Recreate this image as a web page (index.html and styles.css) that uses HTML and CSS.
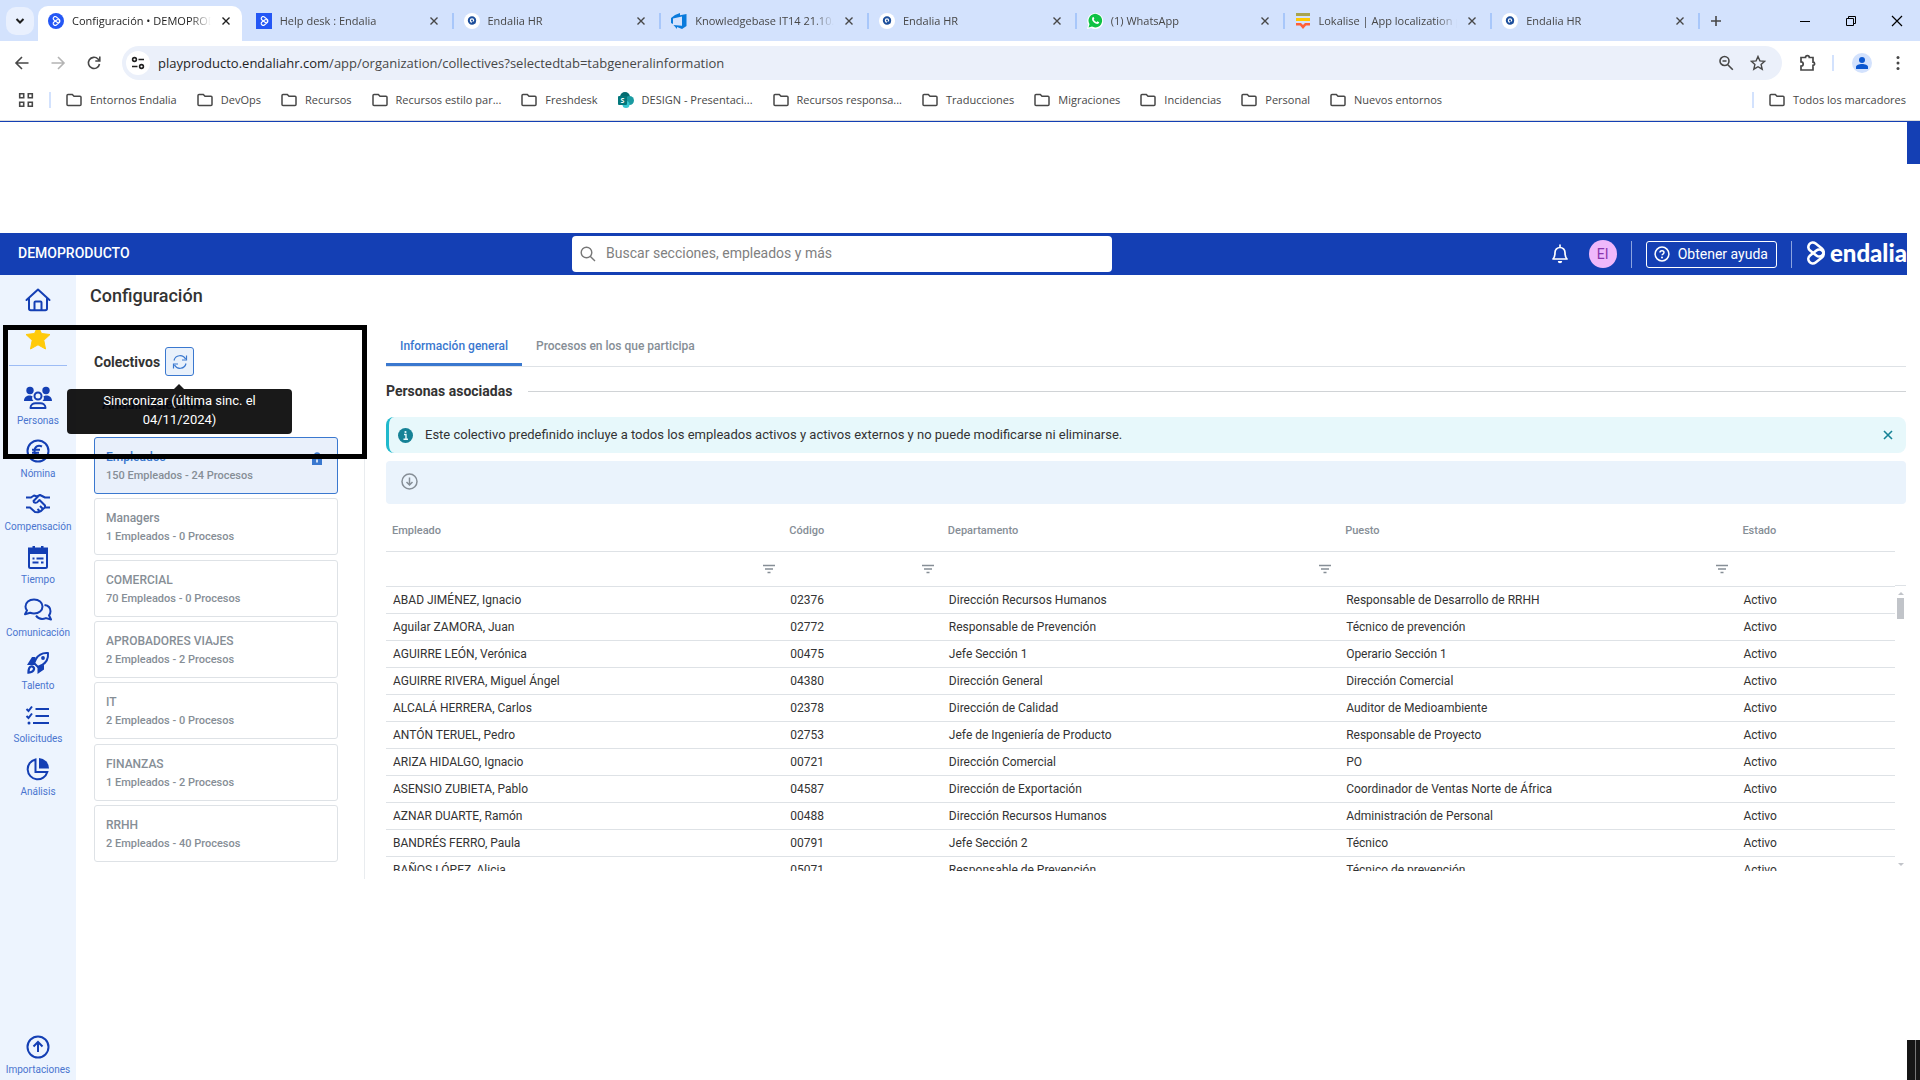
FILE: index.html
```
<!DOCTYPE html>
<html lang="es">
<head>
  <meta charset="utf-8">
  <title>Configuración • DEMOPRODUCTO</title>
  <link rel="stylesheet" href="styles.css">
</head>
<body>
  <!-- Shared icons -->
  <svg class="defs" width="0" height="0">
    <symbol id="folder" viewBox="0 0 16 16"><path d="M1 3.500v9c0 .6.4 1 1 1h12c.6 0 1-.4 1-1V5.300c0-.6-.4-1-1-1H8L6.300 2.500H2c-.6 0-1 .4-1 1z" fill="none" stroke="currentColor" stroke-width="1.500"/></symbol>
    <symbol id="close" viewBox="0 0 16 16"><path d="M4 4l8 8M12 4l-8 8" fill="none" stroke="currentColor" stroke-width="1.600"/></symbol>
    <symbol id="loops" viewBox="0 0 20 24"><g fill="none" stroke="currentColor" stroke-width="2.600"><rect x="1.500" y="4" width="17" height="9" rx="4.500" transform="rotate(38 10 8.500)"/><rect x="1.500" y="11" width="17" height="9" rx="4.500" transform="rotate(-38 10 15.500)"/></g></symbol>
    <symbol id="hr" viewBox="0 0 16 16"><circle cx="8" cy="8" r="8" fill="#fff"/><circle cx="8" cy="7.500" r="3.200" fill="none" stroke="#1d4f9c" stroke-width="2"/><path d="M8 9.500h3.500" stroke="#1d4f9c" stroke-width="2"/><circle cx="8" cy="7.500" r="1" fill="#1d4f9c"/></symbol>
    <symbol id="filter" viewBox="0 0 14 10"><path d="M1 1.500h12M3 5h8M5.500 8.500h3" stroke="currentColor" stroke-width="1.500"/></symbol>
  </svg>

  <div class="browser">
    <div class="tab-strip">
      <button class="tab-search" aria-label="Buscar pestañas"><svg width="10" height="10" viewBox="0 0 10 10"><path d="M1.500 3L5 6.500 8.500 3" fill="none" stroke="currentColor" stroke-width="2"/></svg></button>
      <div class="tabs">
        <div class="tab active"><svg class="fav" viewBox="0 0 16 16"><circle cx="8" cy="8" r="8" fill="#2457f5"/><use href="#loops" x="4" y="3" width="9" height="10" color="#fff"/></svg><span class="tab-title">Configuración • DEMOPRODUCTO</span><button class="tab-x" aria-label="Cerrar"><svg><use href="#close"/></svg></button></div>
        <div class="tab"><svg class="fav" viewBox="0 0 16 16"><path d="M0 0h16v16H0z" fill="#2457f5"/><use href="#loops" x="4" y="3" width="9" height="10" color="#fff"/></svg><span class="tab-title">Help desk : Endalia</span><button class="tab-x" aria-label="Cerrar"><svg><use href="#close"/></svg></button></div>
        <div class="tab"><svg class="fav"><use href="#hr"/></svg><span class="tab-title">Endalia HR</span><button class="tab-x" aria-label="Cerrar"><svg><use href="#close"/></svg></button></div>
        <div class="tab"><svg class="fav" viewBox="0 0 16 16"><path d="M0 5l4-3 5-2v2.200L15.500 1v12L11 16l-5-2v2L2.500 12l8.500.8V3.500L2 5.500V11l-2-1z" fill="#0a7bdc"/></svg><span class="tab-title">Knowledgebase IT14 21.10.24</span><button class="tab-x" aria-label="Cerrar"><svg><use href="#close"/></svg></button></div>
        <div class="tab"><svg class="fav"><use href="#hr"/></svg><span class="tab-title">Endalia HR</span><button class="tab-x" aria-label="Cerrar"><svg><use href="#close"/></svg></button></div>
        <div class="tab"><svg class="fav" viewBox="0 0 16 16"><path d="M0 16l1.200-4.200A8 8 0 1 1 4.300 15z" fill="#fff"/><path d="M1.500 14.500l1-3.300A6.800 6.800 0 1 1 5 13.600z" fill="#0ec244"/><path d="M5.500 4.500c1-1 1.500 0 1.800 1.200L6.700 6.600c.6 1.300 1.400 2 2.700 2.600l.9-.9 1.900 1c-.3 1.800-2 2-3.600 1.200C6.500 9.500 4 7 5.500 4.500z" fill="#fff"/></svg><span class="tab-title">(1) WhatsApp</span><button class="tab-x" aria-label="Cerrar"><svg><use href="#close"/></svg></button></div>
        <div class="tab"><svg class="fav" viewBox="0 0 16 16"><path d="M1 0h14v3H1z" fill="#a9a44f"/><path d="M1 5h14v3H1z" fill="#ffc800"/><path d="M1 10h5l2 2 2-2h5v2.500h-4L8 16l-3-3.500H1z" fill="#ff6038"/></svg><span class="tab-title">Lokalise | App localization platform</span><button class="tab-x" aria-label="Cerrar"><svg><use href="#close"/></svg></button></div>
        <div class="tab"><svg class="fav"><use href="#hr"/></svg><span class="tab-title">Endalia HR</span><button class="tab-x" aria-label="Cerrar"><svg><use href="#close"/></svg></button></div>
      </div>
      <button class="new-tab" aria-label="Nueva pestaña"><svg width="12" height="12" viewBox="0 0 12 12"><path d="M6 1v10M1 6h10" stroke="currentColor" stroke-width="1.600"/></svg></button>
      <div class="win-controls">
        <button aria-label="Minimizar"><svg width="12" height="12" viewBox="0 0 12 12"><path d="M1 6.500h10" stroke="#000"/></svg></button>
        <button aria-label="Restaurar"><svg width="12" height="12" viewBox="0 0 12 12"><path d="M1.500 3.500h7v7h-7zM3.500 3.500v-2h7v7h-2" fill="none" stroke="#000"/></svg></button>
        <button aria-label="Cerrar ventana"><svg width="12" height="12" viewBox="0 0 12 12"><path d="M1 1l10 10M11 1L1 11" stroke="#000" stroke-width="1.200"/></svg></button>
      </div>
    </div>

    <div class="toolbar">
      <div class="history">
        <button aria-label="Atrás"><svg width="16" height="16" viewBox="0 0 16 16"><path d="M14.500 8H2M8 2L2 8l6 6" fill="none" stroke="currentColor" stroke-width="1.600"/></svg></button>
        <button class="dim" aria-label="Adelante"><svg width="16" height="16" viewBox="0 0 16 16"><path d="M1.500 8H14M8 2l6 6-6 6" fill="none" stroke="currentColor" stroke-width="1.600"/></svg></button>
        <button aria-label="Recargar"><svg width="16" height="16" viewBox="0 0 16 16"><path d="M13.500 9A5.600 5.600 0 1 1 12 4l1.500 1.500M13.800 1.500V6H9.300" fill="none" stroke="currentColor" stroke-width="1.600"/></svg></button>
      </div>
      <div class="address">
        <span class="site-info"><svg width="14" height="14" viewBox="0 0 14 14"><g fill="none" stroke="currentColor" stroke-width="1.600"><circle cx="3.500" cy="3.500" r="1.900"/><path d="M7.500 3.500H13M1 10.500h5.500"/><circle cx="10.500" cy="10.500" r="1.900"/></g></svg></span>
        <span class="url"><b>playproducto.endaliahr.com</b>/app/organization/collectives?selectedtab=tabgeneralinformation</span>
        <button aria-label="Zoom"><svg width="16" height="16" viewBox="0 0 16 16"><path d="M6.500 1.500a4.500 4.500 0 1 0 0 9 4.500 4.500 0 0 0 0-9zM9.800 9.800l5 5M4.500 6h4" fill="none" stroke="currentColor" stroke-width="1.600"/></svg></button>
        <button aria-label="Añadir a marcadores"><svg width="16" height="16" viewBox="0 0 16 16"><path d="M8 1.500l1.900 4.400 4.800.4-3.600 3.200 1.100 4.700L8 11.700l-4.200 2.500 1.100-4.700L1.300 6.300l4.800-.4z" fill="none" stroke="currentColor" stroke-width="1.400"/></svg></button>
      </div>
      <button class="ext" aria-label="Extensiones"><svg width="18" height="18" viewBox="0 0 18 18"><path d="M3 3.500h4.500a1.900 1.900 0 0 1 3.800 0H15v4.700a1.600 1.600 0 0 1 0 3.200V16H3v-3.800a2.200 2.200 0 0 0 0-4.400z" fill="none" stroke="currentColor" stroke-width="1.700"/></svg></button>
      <i class="bar"></i>
      <button aria-label="Perfil" class="profile"><svg width="14" height="14" viewBox="0 0 14 14"><circle cx="7" cy="4" r="3" fill="#0b57d0"/><path d="M1 13V11c0-2 3-3 6-3s6 1 6 3v2z" fill="#0b57d0"/></svg></button>
      <button aria-label="Menú"><svg width="16" height="16" viewBox="0 0 16 16"><g fill="currentColor"><circle cx="8" cy="2.500" r="1.500"/><circle cx="8" cy="8" r="1.500"/><circle cx="8" cy="13.500" r="1.500"/></g></svg></button>
    </div>

    <nav class="bookmarks">
      <button aria-label="Aplicaciones"><svg width="16" height="16" viewBox="0 0 16 16"><path d="M1.700 1.700h4v4h-4zM10.300 1.700h4v4h-4zM1.700 10.300h4v4h-4zM10.300 10.300h4v4h-4z" fill="none" stroke="currentColor" stroke-width="1.600"/></svg></button>
      <i class="bar"></i>
      <div class="bookmark-list">
        <a href="#"><svg><use href="#folder"/></svg>Entornos Endalia</a>
        <a href="#"><svg><use href="#folder"/></svg>DevOps</a>
        <a href="#"><svg><use href="#folder"/></svg>Recursos</a>
        <a href="#"><svg><use href="#folder"/></svg>Recursos estilo par...</a>
        <a href="#"><svg><use href="#folder"/></svg>Freshdesk</a>
        <a href="#"><svg viewBox="0 0 16 16"><circle cx="7" cy="5" r="5" fill="#036c70"/><circle cx="11.500" cy="8.500" r="4.500" fill="#1a9ba1"/><circle cx="8" cy="12.500" r="3.500" fill="#37c6d0"/><rect y="4" width="9" height="9" rx="1" fill="#03787c"/><text x="2.500" y="11" font-size="7" font-weight="bold" fill="#fff">S</text></svg>DESIGN - Presentaci...</a>
        <a href="#"><svg><use href="#folder"/></svg>Recursos responsa...</a>
        <a href="#"><svg><use href="#folder"/></svg>Traducciones</a>
        <a href="#"><svg><use href="#folder"/></svg>Migraciones</a>
        <a href="#"><svg><use href="#folder"/></svg>Incidencias</a>
        <a href="#"><svg><use href="#folder"/></svg>Personal</a>
        <a href="#"><svg><use href="#folder"/></svg>Nuevos entornos</a>
      </div>
      <i class="bar"></i>
      <a href="#"><svg><use href="#folder"/></svg>Todos los marcadores</a>
    </nav>
  </div>

  <div class="viewport">
    <div class="app">
      <header class="app-header">
        <span class="company">DEMOPRODUCTO</span>
        <label class="search">
          <svg width="16" height="16" viewBox="0 0 16 16"><path d="M6.500 1.200a5.300 5.300 0 1 0 0 10.600 5.300 5.300 0 0 0 0-10.600zM10.400 10.400l4.600 4.600" fill="none" stroke="currentColor" stroke-width="1.400"/></svg>
          <input type="text" placeholder="Buscar secciones, empleados y más" aria-label="Buscar">
        </label>
        <div class="header-right">
          <button class="bell" aria-label="Notificaciones"><svg width="18" height="20" viewBox="0 0 18 20"><path d="M2 15h14c-2-2-2-3.500-2-6.500a5 5 0 0 0-10 0C4 11.500 4 13 2 15zM9 1v2.500" fill="none" stroke="currentColor" stroke-width="1.700" stroke-linejoin="round" stroke-linecap="round"/><path d="M6.800 17h4.400a2.200 2.200 0 0 1-4.400 0z" fill="currentColor"/></svg></button>
          <span class="avatar">EI</span>
          <i class="sep"></i>
          <button class="help"><svg width="16" height="16" viewBox="0 0 16 16"><circle cx="8" cy="8" r="6.900" fill="none" stroke="currentColor" stroke-width="1.500"/><path d="M6 6.500c0-2.500 4-2.300 4 0C10 8 8 8 8 9.300" fill="none" stroke="currentColor" stroke-width="1.500"/><circle cx="8" cy="11.400" r="1" fill="currentColor"/></svg>Obtener ayuda</button>
          <i class="sep"></i>
          <span class="brand"><svg width="20" height="24"><use href="#loops"/></svg>endalia</span>
        </div>
      </header>

      <div class="app-body">
        <nav class="sidebar">
          <a class="home" href="#" aria-label="Inicio"><svg width="26" height="24" viewBox="0 0 26 24"><g fill="none" stroke="currentColor" stroke-width="2" stroke-linejoin="round" stroke-linecap="round"><path d="M1.500 12L13 1.500 24.500 12M4 10v10.500c0 1 .7 1.700 1.700 1.700h14.600c1 0 1.700-.7 1.700-1.700V10"/><path d="M9.500 22v-7.500c0-.6.4-1 1-1h5c.6 0 1 .4 1 1V22"/></g></svg></a>
          <a class="star" href="#" aria-label="Favoritos"><svg width="26" height="26" viewBox="0 0 26 26"><path d="M13 1l3.500 7.500 8.500 1-6.200 5.800L20.500 24 13 19.800 5.500 24l1.700-8.700L1 9.500l8.500-1z" fill="#ffca0a" stroke="#ffca0a" stroke-linejoin="round"/></svg></a>
          <i class="rule"></i>
          <a class="nav-item" href="#"><svg viewBox="0 0 28 24"><g fill="currentColor"><circle cx="6" cy="4.500" r="3.700"/><circle cx="22" cy="4.500" r="3.700"/><path d="M0 15c0-4 3-5.500 5.500-5.500 1.300 0 2 .3 3 .8-.8 2-.3 3.500 1 4.700zM28 15c0-4-3-5.500-5.500-5.500-1.300 0-2 .3-3 .8.8 2 .3 3.500-1 4.700z"/></g><g fill="none" stroke="currentColor" stroke-width="2"><circle cx="14" cy="10" r="3.500"/><path d="M6.500 22c0-3.500 3-4.700 5-4.700h5c2 0 5 1.200 5 4.700z" stroke-linejoin="round"/></g></svg>Personas</a>
          <a class="nav-item" href="#"><svg viewBox="0 0 28 24"><g fill="none" stroke="currentColor" stroke-width="2"><circle cx="14" cy="12" r="10.500"/><path d="M18 7.500c-4-2-7.500 0-7.500 4.500s3.500 6.500 7.500 4.500M8 10.800h8M8 13.700h7"/></g></svg>Nómina</a>
          <a class="nav-item" href="#"><svg viewBox="0 0 28 24"><g fill="none" stroke="currentColor" stroke-width="2" stroke-linejoin="round"><path d="M2 5.500h5l3-2 3 1 3-1.500 5 2.500h5M2 15.500h4l5 4.500 3 .3 3-1.300 2-2 2-1.500h5"/><path d="M14 4.500L9.500 9c0 2 3 2.500 4.500.5l1.500-1.500 5.500 5.500v2M13.500 17l2 2M16 14l3 3"/></g></svg>Compensación</a>
          <a class="nav-item" href="#"><svg viewBox="0 0 28 24"><path d="M5 3.500h18v18a1.500 1.500 0 0 1-1.500 1.500h-15A1.500 1.500 0 0 1 5 21.500z" fill="none" stroke="currentColor" stroke-width="2"/><path d="M5 3h18v6H5zM8.500 1h2.500v4H8.500zM17 1h2.500v4H17z" fill="currentColor"/><path d="M8.500 13.500h2M12.500 13.500h7M8.500 17.500h6M17 17.500h2.500" stroke="currentColor" stroke-width="2"/></svg>Tiempo</a>
          <a class="nav-item" href="#"><svg viewBox="0 0 28 24"><g fill="none" stroke="currentColor" stroke-width="2" stroke-linejoin="round"><path d="M10 1.500c5 0 8.500 3 8.500 7s-3.500 7-8.500 7c-1.500 0-2.500-.2-3.800-.7L1 16.200l2-3.800c-1-1-1.500-2.400-1.500-3.900 0-4 3.500-7 8.500-7z"/><path d="M20.500 7c3.500.5 6 3 6 6.300 0 1.600-.6 3-1.500 4l2 4.200-5-1.400c-4 1.500-8 .3-10-2.500"/></g></svg>Comunicación</a>
          <a class="nav-item" href="#"><svg viewBox="0 0 28 24"><path d="M24 2c-6-.5-9.500 1.500-12 6l-2 4 4 4 4-2c4.500-2.500 6.500-6 6-12z" fill="none" stroke="currentColor" stroke-width="2" stroke-linejoin="round"/><circle cx="19" cy="7" r="1.900" fill="currentColor"/><path d="M11.500 6H8l-5 8h8zM20 14v4.500L13.500 23v-8z" fill="currentColor"/><path d="M4.500 21.500c0-4 .8-5.500 2.500-6s3.500 1 3 2.800-1.500 3.200-5.500 3.200z" fill="none" stroke="currentColor" stroke-width="2.300"/></svg>Talento</a>
          <a class="nav-item" href="#"><svg viewBox="0 0 28 24"><path d="M2.500 5l2 2L8 2.500M2.500 12l2 2L8 9.500M11.500 5H25M11.500 12H25M9 19h16" fill="none" stroke="currentColor" stroke-width="2"/><circle cx="5" cy="19" r="1.500" fill="currentColor"/></svg>Solicitudes</a>
          <a class="nav-item" href="#"><svg viewBox="0 0 28 24"><path d="M11.500 2.500a10 10 0 1 0 11.800 12.500h-11.800z" fill="none" stroke="currentColor" stroke-width="2"/><path d="M15 1A10.500 10.500 0 0 1 25 11.500H15z" fill="currentColor"/></svg>Análisis</a>
          <a class="nav-item last" href="#"><svg viewBox="0 0 28 24"><g fill="none" stroke="currentColor" stroke-width="2"><circle cx="14" cy="12" r="10.500"/><path d="M14 17V7.500M9.500 11.500L14 7l4.500 4.500"/></g></svg>Importaciones</a>
        </nav>

        <div class="page">
          <h1>Configuración</h1>
          <div class="columns">
            <section class="collectives">
              <div class="collectives-head">
                <h2>Colectivos</h2>
                <button class="sync" aria-label="Sincronizar"><svg width="16" height="16" viewBox="0 0 16 16"><path d="M2 6.500A6.200 6.200 0 0 1 13.500 5M14 9.500A6.200 6.200 0 0 1 2.500 11M14.500 1.500V6H10M1.500 14.500V10H6" fill="none" stroke="currentColor" stroke-width="1.200"/></svg></button>
                <div class="tooltip" role="tooltip">Sincronizar (última sinc. el 04/11/2024)</div>
              </div>
              <button class="add">Añadir colectivo</button>
              <div class="cards">
                <a class="card selected" href="#"><span class="name">Empleados</span><span class="info">150 Empleados - 24 Procesos</span><svg class="lock" width="10" height="13" viewBox="0 0 10 13"><path d="M0 5h10v8H0z" fill="currentColor"/><path d="M2.500 5V3.500a2.500 2.500 0 0 1 5 0V5" fill="none" stroke="currentColor" stroke-width="1.500"/><path d="M5 7.500v3" stroke="#fff" stroke-width="1.500"/></svg></a>
                <a class="card" href="#"><span class="name">Managers</span><span class="info">1 Empleados - 0 Procesos</span></a>
                <a class="card" href="#"><span class="name">COMERCIAL</span><span class="info">70 Empleados - 0 Procesos</span></a>
                <a class="card" href="#"><span class="name">APROBADORES VIAJES</span><span class="info">2 Empleados - 2 Procesos</span></a>
                <a class="card" href="#"><span class="name">IT</span><span class="info">2 Empleados - 0 Procesos</span></a>
                <a class="card" href="#"><span class="name">FINANZAS</span><span class="info">1 Empleados - 2 Procesos</span></a>
                <a class="card" href="#"><span class="name">RRHH</span><span class="info">2 Empleados - 40 Procesos</span></a>
              </div>
            </section>

            <main class="detail">
              <div class="detail-tabs">
                <button class="current">Información general</button>
                <button>Procesos en los que participa</button>
              </div>
              <h2 class="ruled">Personas asociadas</h2>
              <div class="alert">
                <svg width="15" height="15" viewBox="0 0 15 15"><circle cx="7.500" cy="7.500" r="7.500" fill="#168296"/><path d="M6 6.500h2V11M5.500 11.300h4.500" fill="none" stroke="#e7f8fb" stroke-width="1.400"/><circle cx="7.500" cy="4" r="1.100" fill="#e7f8fb"/></svg>
                <span>Este colectivo predefinido incluye a todos los empleados activos y activos externos y no puede modificarse ni eliminarse.</span>
                <button aria-label="Cerrar aviso"><svg width="16" height="16"><use href="#close"/></svg></button>
              </div>
              <div class="actions">
                <button aria-label="Descargar"><svg width="17" height="17" viewBox="0 0 17 17"><g fill="none" stroke="currentColor" stroke-width="1.500"><circle cx="8.500" cy="8.500" r="7.500"/><path d="M8.500 4.500v7.500M5.500 9l3 3 3-3"/></g></svg></button>
              </div>
              <div class="grid">
                <table>
                  <colgroup><col class="wide"><col class="narrow"><col class="wide"><col class="wide"><col class="narrow"></colgroup>
                  <thead>
                    <tr><th>Empleado</th><th>Código</th><th>Departamento</th><th>Puesto</th><th>Estado</th></tr>
                    <tr class="filters"><td><svg><use href="#filter"/></svg></td><td><svg><use href="#filter"/></svg></td><td><svg><use href="#filter"/></svg></td><td><svg><use href="#filter"/></svg></td><td></td></tr>
                  </thead>
                  <tbody>
                    <tr><td>ABAD JIMÉNEZ, Ignacio</td><td>02376</td><td>Dirección Recursos Humanos</td><td>Responsable de Desarrollo de RRHH</td><td>Activo</td></tr>
                    <tr><td>Aguilar ZAMORA, Juan</td><td>02772</td><td>Responsable de Prevención</td><td>Técnico de prevención</td><td>Activo</td></tr>
                    <tr><td>AGUIRRE LEÓN, Verónica</td><td>00475</td><td>Jefe Sección 1</td><td>Operario Sección 1</td><td>Activo</td></tr>
                    <tr><td>AGUIRRE RIVERA, Miguel Ángel</td><td>04380</td><td>Dirección General</td><td>Dirección Comercial</td><td>Activo</td></tr>
                    <tr><td>ALCALÁ HERRERA, Carlos</td><td>02378</td><td>Dirección de Calidad</td><td>Auditor de Medioambiente</td><td>Activo</td></tr>
                    <tr><td>ANTÓN TERUEL, Pedro</td><td>02753</td><td>Jefe de Ingeniería de Producto</td><td>Responsable de Proyecto</td><td>Activo</td></tr>
                    <tr><td>ARIZA HIDALGO, Ignacio</td><td>00721</td><td>Dirección Comercial</td><td>PO</td><td>Activo</td></tr>
                    <tr><td>ASENSIO ZUBIETA, Pablo</td><td>04587</td><td>Dirección de Exportación</td><td>Coordinador de Ventas Norte de África</td><td>Activo</td></tr>
                    <tr><td>AZNAR DUARTE, Ramón</td><td>00488</td><td>Dirección Recursos Humanos</td><td>Administración de Personal</td><td>Activo</td></tr>
                    <tr><td>BANDRÉS FERRO, Paula</td><td>00791</td><td>Jefe Sección 2</td><td>Técnico</td><td>Activo</td></tr>
                    <tr><td>BAÑOS LÓPEZ, Alicia</td><td>05071</td><td>Responsable de Prevención</td><td>Técnico de prevención</td><td>Activo</td></tr>
                  </tbody>
                </table>
                <div class="scrollbar"><i class="up"></i><i class="thumb"></i><i class="down"></i></div>
              </div>
            </main>
          </div>
        </div>
      </div>
    </div>
    <div class="edge"><i class="edge-top"></i><i class="edge-bottom"></i></div>
    <!-- Highlighted area -->
    <div class="highlight"></div>
  </div>
</body>
</html>
```
FILE: styles.css
```
:root {
  --blue: #143fb4;
  --link: #3a78cf;
  --grey: #868e96;
  --text: #333;
  --line: #dee2e6;
}

* {
  box-sizing: border-box;
}

body {
  margin: 0;
  height: 100vh;
  display: flex;
  flex-direction: column;
  overflow: hidden;
  background: #fff;
  color: var(--text);
  font: 12px/16px Roboto, sans-serif;
}

button {
  padding: 0;
  border: 0;
  background: none;
  color: inherit;
  font: inherit;
}

a {
  color: inherit;
  text-decoration: none;
}

svg {
  display: block;
  flex: none;
}

.defs {
  position: absolute;
}

h1, h2 {
  margin: 0;
  font-weight: 500;
}

/* Browser */
.browser {
  flex: none;
  color: #474747;
  font: 11px/16px "Open Sans", sans-serif;
  border-bottom: 1px solid var(--blue);
}

.tab-strip {
  display: flex;
  align-items: center;
  height: 41px;
  padding-left: 6px;
  background: #d3e2fd;
}

.tab-search {
  display: grid;
  place-items: center;
  width: 28px;
  height: 28px;
  margin-right: 4px;
  border-radius: 10px;
  background: #e9f0fe;
  color: #1f1f1f;
}

.tabs {
  display: flex;
  align-items: center;
  align-self: stretch;
  flex: 0 1 1662px;
  min-width: 0;
}

.tab {
  display: flex;
  align-items: center;
  flex: 1;
  min-width: 0;
  height: 16px;
  padding: 0 11px 0 10px;
  border-right: 2px solid #a8c7fa;
}

.tab.active {
  height: 35px;
  align-self: flex-end;
  margin-right: 4px;
  padding: 0 9px 6px 10px;
  border-right: 0;
  border-radius: 10px 10px 0 0;
  background: #fff;
  color: #1f1f1f;
}

.fav {
  width: 16px;
  height: 16px;
  margin-right: 8px;
}

.tab-title {
  flex: 1;
  overflow: hidden;
  white-space: nowrap;
  mask-image: linear-gradient(90deg, #000 85%, transparent);
}

.tab-x {
  margin-left: 8px;
}

.tab-x svg {
  width: 14px;
  height: 14px;
}

.new-tab {
  margin-left: 10px;
}

.win-controls {
  display: flex;
  gap: 34px;
  margin-left: auto;
  padding-right: 17px;
}

.toolbar {
  display: flex;
  align-items: center;
  gap: 16px;
  height: 44px;
  padding: 0 14px;
}

.history {
  display: flex;
  gap: 20px;
  padding-right: 4px;
}

.toolbar .dim {
  color: #b4b4b4;
}

.address {
  flex: 1;
  display: flex;
  align-items: center;
  gap: 16px;
  height: 34px;
  padding: 0 16px 0 4px;
  border-radius: 17px;
  background: #ebf0fa;
}

.site-info {
  display: grid;
  place-items: center;
  width: 24px;
  height: 24px;
  border-radius: 12px;
  background: #fff;
  color: #1f1f1f;
}

.url {
  flex: 1;
  margin-left: -8px;
  font-size: 13px;
}

.url b {
  font-weight: 400;
  color: #1f1f1f;
}

.bar {
  width: 2px;
  height: 16px;
  background: #d3e2fd;
}

.profile {
  display: grid;
  place-items: center;
  width: 20px;
  height: 20px;
  margin: 0 2px;
  border-radius: 10px;
  background: #d3e2fd;
}

.bookmarks {
  display: flex;
  align-items: center;
  gap: 15px;
  height: 36px;
  padding: 0 14px 5px 18px;
  border-bottom: 1px solid #dcdcdc;
  white-space: nowrap;
}

.bookmark-list {
  flex: 1;
  display: flex;
  gap: 20px;
}

.bookmarks a {
  display: flex;
  align-items: center;
  gap: 8px;
}

.bookmarks a svg {
  width: 16px;
  height: 16px;
}

/* App shell */
.viewport {
  position: relative;
  flex: 1;
  display: flex;
  min-height: 0;
}

.app {
  flex: 1;
  min-width: 0;
  display: flex;
  flex-direction: column;
  padding-top: 111px;
}

.edge {
  flex: none;
  width: 13px;
  display: flex;
  flex-direction: column;
  justify-content: space-between;
}

.edge-top {
  height: 42px;
  background: var(--blue);
}

.edge-bottom {
  height: 40px;
  background: linear-gradient(90deg, #161616 8px, #777 8px, #777 9px, #161616 9px);
}

.highlight {
  position: absolute;
  top: 203px;
  left: 3px;
  width: 364px;
  height: 134px;
  border: 5px solid #000;
  pointer-events: none;
}

.app-header {
  display: grid;
  grid-template-columns: 30% 540px 1fr;
  align-items: center;
  height: 42px;
  background: var(--blue);
  color: #fff;
  font-size: 14px;
}

.company {
  padding: 0 0 2px 18px;
  font-weight: 500;
}

.search {
  display: flex;
  align-items: center;
  gap: 8px;
  height: 36px;
  padding: 0 8px;
  border-radius: 4px;
  background: #fff;
  color: #777;
}

.search input {
  flex: 1;
  padding: 0 0 2px 2px;
  border: 0;
  outline: 0;
  font: 14px Roboto, sans-serif;
}

.search input::placeholder {
  color: #808080;
}

.header-right {
  display: flex;
  align-items: center;
  justify-content: flex-end;
  gap: 14px;
}

.bell {
  margin-right: 6px;
}

.avatar {
  width: 28px;
  height: 28px;
  border-radius: 14px;
  background: #efb8fb;
  color: #8a35ad;
  line-height: 28px;
  text-align: center;
}

.sep {
  width: 1px;
  height: 27px;
  background: #8ba3e0;
}

.help {
  display: flex;
  align-items: center;
  gap: 8px;
  height: 27px;
  padding: 0 8px 1px 7px;
  border: 1px solid #fff;
  border-radius: 3px;
}

.brand {
  display: flex;
  align-items: center;
  gap: 4px;
  padding-bottom: 3px;
  font: 900 24px/24px Lato, sans-serif;
}

.app-body {
  flex: 1;
  display: flex;
  min-height: 0;
}

/* Sidebar */
.sidebar {
  flex: none;
  width: 76px;
  display: flex;
  flex-direction: column;
  align-items: center;
  padding: 13px 0 2px;
  background: #edf4fe;
  color: var(--blue);
}

.star {
  margin-top: 13px;
}

.sidebar .rule {
  width: 58px;
  height: 1px;
  margin: 14px 0 20px;
  background: #9dbcf5;
}

.nav-item {
  height: 53px;
  color: #4a74cf;
  font-size: 10px;
  text-align: center;
}

.nav-item svg {
  width: 28px;
  height: 24px;
  margin: 0 auto 3px;
  color: var(--blue);
}

.nav-item.last {
  height: 43px;
  margin-top: auto;
}

/* Page */
.page {
  flex: 1;
  min-width: 0;
  padding: 9px 1px 0 0;
}

h1 {
  padding-left: 14px;
  font-size: 18px;
  line-height: 24px;
}

.columns {
  display: flex;
  gap: 21px;
  margin-top: 19px;
}

.collectives {
  flex: none;
  width: 289px;
  height: 552px;
  padding: 20px 26px 0 18px;
  border-right: 1px solid #e9ecef;
}

.collectives-head {
  position: relative;
  display: flex;
  align-items: center;
  gap: 5px;
}

h2 {
  font-size: 14px;
  line-height: 20px;
  font-weight: 700;
}

.sync {
  display: grid;
  place-items: center;
  width: 29px;
  height: 29px;
  border: 1px solid var(--link);
  border-radius: 3px;
  background: #e9f1fb;
  color: var(--link);
}

.tooltip {
  position: absolute;
  top: 42px;
  left: -27px;
  width: 225px;
  padding: 2px 30px 5px;
  border-radius: 4px;
  background: rgba(0, 0, 0, 0.9);
  color: #fff;
  font-size: 13px;
  line-height: 19px;
  text-align: center;
}

.tooltip::before {
  content: '';
  position: absolute;
  top: -5px;
  left: 107px;
  border: 5px solid transparent;
  border-top: 0;
  border-bottom-color: #1a1a1a;
}

.add {
  display: block;
  margin: 19px 0 24px 8px;
  color: #143fb4;
  font-size: 14px;
  line-height: 18px;
  font-weight: 500;
}

.cards {
  display: flex;
  flex-direction: column;
  justify-content: space-between;
  height: 425px;
}

.card {
  position: relative;
  display: flex;
  flex-direction: column;
  gap: 3px;
  height: 57px;
  padding: 11px;
  border: 1px solid var(--line);
  border-radius: 3px;
  color: var(--grey);
  font-weight: 500;
}

.card .info {
  font-size: 11px;
}

.card.selected {
  border-color: var(--link);
  background: #e9f0fb;
}

.card.selected .name,
.lock {
  color: var(--link);
}

.lock {
  position: absolute;
  top: 14px;
  right: 15px;
}

/* Detail */
.detail {
  flex: 1;
  min-width: 0;
}

.detail-tabs {
  display: flex;
  height: 40px;
  border-bottom: 1px solid var(--line);
}

.detail-tabs button {
  padding: 2px 14px 0;
  border-bottom: 3px solid transparent;
  color: var(--grey);
  font-weight: 500;
}

.detail-tabs .current {
  border-bottom-color: var(--link);
  color: var(--link);
}

.ruled {
  display: flex;
  align-items: center;
  gap: 16px;
  margin: 14px 0 16px;
}

.ruled::after {
  content: '';
  flex: 1;
  height: 1px;
  background: #d0d3d6;
}

.alert {
  display: flex;
  align-items: center;
  gap: 12px;
  height: 36px;
  padding: 0 10px 0 9px;
  border-left: 3px solid #20b9cc;
  border-radius: 8px;
  background: #e7f8fb;
}

.alert span {
  flex: 1;
  font-size: 13px;
}

.alert button {
  color: #168296;
}

.actions {
  display: flex;
  align-items: center;
  height: 43px;
  margin-top: 8px;
  padding: 0 0 2px 15px;
  border-radius: 4px;
  background: #eaf3fc;
  color: var(--grey);
}

.grid {
  display: flex;
  height: 367px;
  overflow: hidden;
}

table {
  flex: 1;
  table-layout: fixed;
  border-collapse: collapse;
}

.wide {
  width: 26.3%;
}

.narrow {
  width: 10.5%;
}

tr {
  height: 27px;
  border-bottom: 1px solid var(--line);
}

th {
  height: 47px;
  padding: 8px 6px 0;
  color: var(--grey);
  font-size: 11px;
  font-weight: 500;
  text-align: left;
}

td {
  padding: 0 7px;
}

.filters {
  height: 35px;
}

.filters svg {
  width: 14px;
  height: 10px;
  margin-left: auto;
  color: var(--grey);
}

.scrollbar {
  width: 11px;
  display: flex;
  flex-direction: column;
  align-items: center;
  gap: 3px;
  margin-top: 81px;
  padding: 6px 0 5px;
  border-top: 1px solid var(--line);
}

.scrollbar i {
  border: 3px solid transparent;
}

.scrollbar .up {
  border-top: 0;
  border-bottom-color: #c1c4c9;
}

.scrollbar .thumb {
  width: 7px;
  height: 21px;
  border: 0;
  background: #c1c4c9;
}

.scrollbar .down {
  margin-top: auto;
  border-bottom: 0;
  border-top-color: #c1c4c9;
}
```
